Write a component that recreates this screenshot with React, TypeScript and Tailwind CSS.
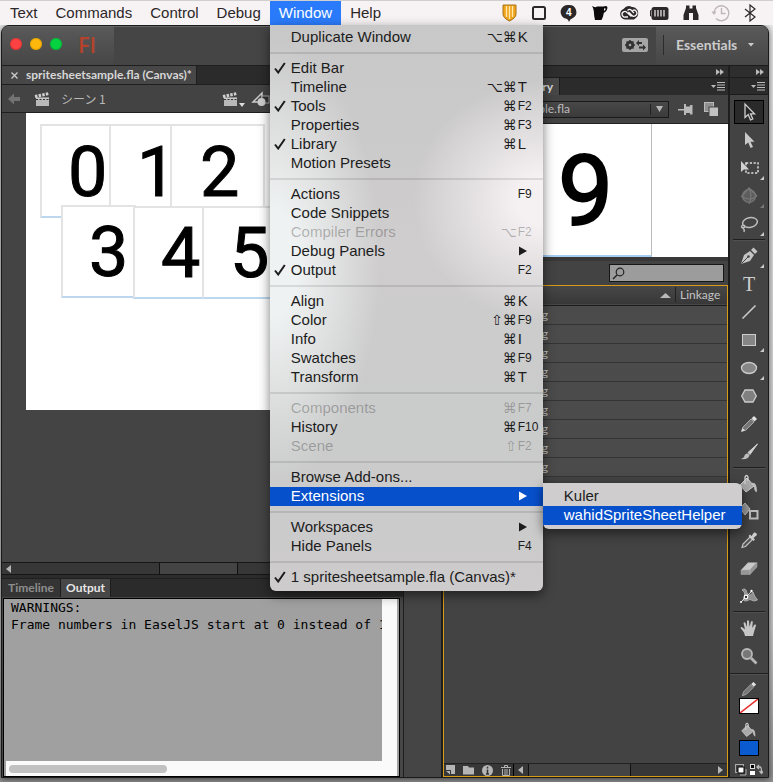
import React from "react";

type Entry =
  | { kind: "sep" }
  | {
      kind: "item";
      label: string;
      mods?: string;
      keyName?: string;
      checked?: boolean;
      disabled?: boolean;
      sub?: boolean;
      active?: boolean;
    };

const sep: Entry = { kind: "sep" };
const item = (label: string, rest: Partial<Extract<Entry, { kind: "item" }>> = {}): Entry => ({
  ...rest,
  kind: "item",
  label,
});

const windowMenu: Entry[] = [
  item("Duplicate Window", { mods: "⌥⌘", keyName: "K" }),
  sep,
  item("Edit Bar", { checked: true }),
  item("Timeline", { mods: "⌥⌘", keyName: "T" }),
  item("Tools", { checked: true, mods: "⌘", keyName: "F2" }),
  item("Properties", { mods: "⌘", keyName: "F3" }),
  item("Library", { checked: true, mods: "⌘", keyName: "L" }),
  item("Motion Presets"),
  sep,
  item("Actions", { keyName: "F9" }),
  item("Code Snippets"),
  item("Compiler Errors", { mods: "⌥", keyName: "F2", disabled: true }),
  item("Debug Panels", { sub: true }),
  item("Output", { checked: true, keyName: "F2" }),
  sep,
  item("Align", { mods: "⌘", keyName: "K" }),
  item("Color", { mods: "⇧⌘", keyName: "F9" }),
  item("Info", { mods: "⌘", keyName: "I" }),
  item("Swatches", { mods: "⌘", keyName: "F9" }),
  item("Transform", { mods: "⌘", keyName: "T" }),
  sep,
  item("Components", { mods: "⌘", keyName: "F7", disabled: true }),
  item("History", { mods: "⌘", keyName: "F10" }),
  item("Scene", { mods: "⇧", keyName: "F2", disabled: true }),
  sep,
  item("Browse Add-ons..."),
  item("Extensions", { sub: true, active: true }),
  sep,
  item("Workspaces", { sub: true }),
  item("Hide Panels", { keyName: "F4" }),
  sep,
  item("1 spritesheetsample.fla (Canvas)*", { checked: true }),
];

function MenuRow({ entry }: { entry: Entry }) {
  if (entry.kind === "sep") {
    return (
      <div role="separator" className="flex h-3 items-center">
        <div className="h-[2px] w-full bg-black/10" />
      </div>
    );
  }
  const tone = entry.active
    ? "bg-[#0650cc] text-white"
    : entry.disabled
      ? "text-[#1c1c1c]/30"
      : "text-[#1c1c1c]";
  const fkey = entry.keyName && entry.keyName.length > 1;
  return (
    <button
      type="button"
      role="menuitem"
      disabled={entry.disabled}
      className={`relative flex h-[19px] w-full items-center pb-px text-left leading-[18px] whitespace-nowrap ${tone}`}
    >
      <span className="flex w-[21px] justify-center">
        {entry.checked && (
          <svg width="12" height="12" viewBox="0 0 12 12" fill="none" stroke="currentColor" strokeWidth="2">
            <path d="M1 6.5 L4.2 10.5 L10.8 1" />
          </svg>
        )}
      </span>
      <span className="flex-1">{entry.label}</span>
      {entry.mods && (
        <span className="pr-px font-['DejaVu_Sans',sans-serif] text-sm leading-[18px]">{entry.mods}</span>
      )}
      {(entry.keyName || entry.sub) && (
        <span className="flex w-[25px] items-center">
          {entry.sub ? (
            <svg width="9" height="10" viewBox="0 0 9 10" fill="currentColor">
              <path d="M1 .5 L9 5 L1 9.5Z" />
            </svg>
          ) : (
            <span className={fkey ? "text-xs leading-[18px]" : "text-[15px] leading-[18px]"}>{entry.keyName}</span>
          )}
        </span>
      )}
    </button>
  );
}

function WindowMenu() {
  return (
    <div
      role="menu"
      className="absolute top-full left-0 z-20 w-[273px] rounded-b-md bg-[radial-gradient(ellipse_130px_120px_at_100%_31%,#f5f0f2_20%,#f5f0f200_100%),radial-gradient(ellipse_110px_220px_at_0%_42%,#eff2f2_25%,#eff2f200_100%),linear-gradient(#c8c8c8,#cfcdce_40%,#cacbcb_70%,#cdcbcc)] pt-[3px] pb-1 shadow-[0_4px_12px_#0008]"
    >
      {windowMenu.map((e, i) => (
        <MenuRow key={i} entry={e} />
      ))}
      <div
        role="menu"
        className="absolute top-[458px] left-full w-[199px] rounded-md rounded-tl-none bg-[#cfcdce] py-1 shadow-[0_4px_12px_#0008]"
      >
        <MenuRow entry={item("Kuler")} />
        <MenuRow entry={item("wahidSpriteSheetHelper", { active: true })} />
      </div>
    </div>
  );
}

function StatusIcons() {
  const c = "#2b2729";
  return (
    <div className="flex flex-1 items-center justify-end gap-[10px] pr-[14px]">
      <svg width="20" height="20" viewBox="0 0 20 20">
        <path d="M4 2h13v9q0 4-6.500 7Q4 15 4 11Z" fill="#f0a41c" stroke="#a8741a" />
        <path d="M7.500 3v11M10.500 3v13M13.500 3v11" stroke="#fde9b0" strokeWidth="1.300" />
      </svg>
      <svg width="20" height="20" viewBox="0 0 20 20" fill="none" stroke={c} strokeWidth="2">
        <rect x="4" y="4" width="12" height="12" rx="1.500" />
      </svg>
      <svg width="20" height="20" viewBox="0 0 20 20">
        <path d="M10 2a7.200 7 0 0 1 3.500 13.200Q11 16 10 19Q9.500 16.500 7.500 15.800A7.200 7 0 0 1 10 2Z" fill={c} />
        <text x="7" y="13" fontSize="10" fontWeight="bold" fill="#fff" fontFamily="Liberation Sans, sans-serif">4</text>
      </svg>
      <svg width="20" height="20" viewBox="0 0 20 20">
        <path d="M3 3Q6 5 8 3.500H14.500Q18.500 2 18.500 5Q18 8.500 14.800 10Q14 15 12.500 17H6Q5 13 4.800 8Q4.500 5 3 3Z" fill="#0c0a0b" />
        <path d="M15 5.500q1.800-.5 1.600.5T15 8Z" fill="#f7f2f4" />
      </svg>
      <svg width="20" height="20" viewBox="0 0 20 20">
        <path d="M6 16.500A5.500 5.500 0 0 1 4.500 6Q8 1.500 13 4Q16 3.500 18.500 7Q21 13 15 16.500Z" fill={c} />
        <path d="M12.500 13.500 8 9.500A2.800 2.800 0 1 0 6.500 14H9M8.500 7.500Q11 5 13 8L15 10M9.500 9 12.500 12A3 3 0 1 0 13.500 7.500" fill="none" stroke="#f7f2f4" strokeWidth="1.300" />
      </svg>
      <svg width="22" height="20" viewBox="0 0 22 20">
        <rect x="2.500" y="4" width="17" height="13" rx="2.500" fill={c} />
        <path d="M2.500 7.500H1.500V13H2.500" stroke={c} fill="none" />
        <path d="M6 7v6.500M9 7v6.500M12 7v6.500M15 7v6.500" stroke="#f7f2f4" strokeWidth="1.200" />
      </svg>
      <svg width="20" height="20" viewBox="0 0 20 20" fill={c}>
        <path d="M5 2.500H8.500V5.500H11.500V2.500H15V5L17.500 12V17H12V10H8V17H2.500V12L5 5Z" />
      </svg>
      <svg width="20" height="20" viewBox="0 0 20 20" fill="none" stroke="#bdb7ba" strokeWidth="1.400">
        <path d="M3 9A7.500 7.500 0 1 1 5 15.500M10.500 5V10.500H14.500" />
        <path d="M.5 8.500h5L3 12Z" fill="#bdb7ba" stroke="none" />
      </svg>
      <svg width="18" height="20" viewBox="0 0 18 20" fill="none" stroke={c} strokeWidth="1.200">
        <path d="M4 6 14 14 9 18V2L14 6 4 14" />
      </svg>
    </div>
  );
}

function MenuBar() {
  const cell = "flex h-full items-center px-[9px]";
  return (
    <nav className="relative z-10 flex h-[25px] shrink-0 border-t border-[#cfcfcf] bg-[#f7f2f4] text-[15px] text-[#2b2729]">
      {["Text", "Commands", "Control", "Debug"].map((n) => (
        <button key={n} type="button" className={`${cell} first:pl-[10px]`}>
          {n}
        </button>
      ))}
      <div className="relative">
        <button type="button" aria-expanded="true" className={`${cell} bg-[#2a7bfb] text-white`}>
          Window
        </button>
        <WindowMenu />
      </div>
      <button type="button" className={cell}>
        Help
      </button>
      <StatusIcons />
    </nav>
  );
}

function TitleBar() {
  return (
    <header className="flex h-[39px] shrink-0 items-stretch rounded-t-md border-t border-[#666] bg-[#454545]">
      <div className="flex w-28 items-center gap-2 rounded-tl-md bg-linear-to-b from-[#595959] to-[#464646] pb-1 pl-2">
        <button type="button" aria-label="Close" className="size-3 rounded-full bg-[#fc4142] ring-1 ring-[#c92c2c]/60 ring-inset" />
        <button type="button" aria-label="Minimize" className="size-3 rounded-full bg-[#fdb90b] ring-1 ring-[#d09300]/60 ring-inset" />
        <button type="button" aria-label="Zoom" className="size-3 rounded-full bg-[#06d241] ring-1 ring-[#08a035]/60 ring-inset" />
        <span className="pl-2 font-['Open_Sans',sans-serif] text-[22px] leading-[30px] font-semibold text-[#b5432b]">Fl</span>
      </div>
      <div className="flex flex-1 items-center justify-end pr-2 pb-[2px]">
        <button type="button" aria-label="Sync settings" className="flex h-[14px] w-[26px] items-center rounded-xs bg-[#a5a5a5]">
          <svg width="26" height="14" viewBox="0 0 26 14">
            <circle cx="8" cy="7" r="3" fill="none" stroke="#333" strokeWidth="2.500" />
            <path d="M8 2v10M3 7h10M4.500 3.500l7 7M11.500 3.500l-7 7" stroke="#333" strokeWidth="1.500" />
            <circle cx="8" cy="7" r="1.300" fill="#a5a5a5" />
            <path d="M14 5 17 2V4H20V6H17V8ZM24 9.500 21 6.500V8.500H17V10.500H21V12.500Z" fill="#333" />
          </svg>
        </button>
      </div>
      <div className="flex w-[112px] items-center rounded-tr-md bg-linear-to-b from-[#595959] to-[#464646] pb-[3px] pl-[7px] font-bold text-[#ccc]">
        <div className="h-5 w-px bg-[#2c2c2c]" />
        <button type="button" className="flex flex-1 items-center justify-between pr-[14px] pl-3 text-sm">
          Essentials
          <svg width="6" height="4" viewBox="0 0 6 4" fill="#ccc">
            <path d="M0 0h6L3 3.500Z" />
          </svg>
        </button>
      </div>
    </header>
  );
}

function Clapper() {
  return (
    <svg width="17" height="16" viewBox="0 0 17 16">
      <rect x="2" y="7" width="13" height="8" fill="#b9b9b9" />
      <path d="M2 8.500h13" stroke="#333" strokeWidth="1" strokeDasharray="2 1.500" />
      <path d="M1 5.500 15 2.500" stroke="#d0d0d0" strokeWidth="3" strokeDasharray="2.500 1.200" />
      <path d="M2 7 15 7" stroke="#ddd" strokeWidth="1" />
    </svg>
  );
}

function Tile({ digit, box, text }: { digit: string; box: string; text: string }) {
  return (
    <div className={`absolute border-2 border-[#e3e3e3] border-b-[#bcd7ee] bg-white ${box}`}>
      <span
        className={`absolute font-['Roboto',sans-serif] text-[70px] leading-[68px] text-black [-webkit-text-stroke:1px_#000] ${text}`}
      >
        {digit}
      </span>
    </div>
  );
}

function DocumentPane() {
  return (
    <>
      <div className="flex h-5 shrink-0 border-y border-[#1f1f1f] bg-[#2b2b2b]">
        <div className="flex w-[195px] items-center gap-2 border-r border-[#1f1f1f] bg-[#474747] pl-[9px] text-xs font-bold text-[#d6d6d6]">
          <button type="button" aria-label="Close document">
            <svg width="7" height="7" viewBox="0 0 7 7" stroke="#ccc" strokeWidth="1.300">
              <path d="M.5 .5 6.500 6.500M6.500 .5.500 6.500" />
            </svg>
          </button>
          <span className="whitespace-nowrap">spritesheetsample.fla (Canvas)*</span>
        </div>
      </div>
      <div className="flex h-7 shrink-0 items-center border-b border-[#1f1f1f] bg-[#434343] pl-[6px] text-[#b9b9b9]">
        <svg width="12" height="12" viewBox="0 0 12 12" fill="#737373">
          <path d="M0 6 6 .5V4H12V8H6V11.500Z" />
        </svg>
        <div className="flex items-center gap-[10px] pl-[14px]">
          <Clapper />
          <span className="font-['Noto_Sans_CJK_JP',sans-serif] text-xs">シーン 1</span>
        </div>
        <div className="ml-[116px] flex items-center gap-[6px]">
          <button type="button" aria-label="Edit scene" className="flex items-end">
            <Clapper />
            <svg width="6" height="4" viewBox="0 0 6 4" fill="#ddd">
              <path d="M0 0h6L3 4Z" />
            </svg>
          </button>
          <button type="button" aria-label="Edit symbols">
            <svg width="20" height="16" viewBox="0 0 20 16">
              <path d="M2 11 11 2V11Z" fill="#444" stroke="#ccc" strokeWidth="1.500" />
              <rect x="11" y="5" width="7" height="7" fill="#333" stroke="#aaa" />
              <circle cx="10.500" cy="11" r="4" fill="#ccc" />
            </svg>
          </button>
        </div>
      </div>
      <div className="relative min-h-0 flex-1 overflow-hidden bg-[#444] pl-6">
        <div className="relative h-[297px] bg-white">
          <Tile digit="0" box="left-[14px] top-[11px] h-[94px] w-[72px]" text="left-[26px] top-[12px]" />
          <Tile digit="1" box="left-[83px] top-[11px] h-[94px] w-[63px]" text="left-[26px] top-[12px]" />
          <Tile digit="2" box="left-[144px] top-[11px] h-[94px] w-[95px]" text="left-[28px] top-[12px]" />
          <Tile digit="3" box="left-[35px] top-[92px] h-[93px] w-[75px]" text="left-[26px] top-[11px]" />
          <Tile digit="4" box="left-[107px] top-[93px] h-[93px] w-[71px]" text="left-[26px] top-[11px]" />
          <Tile digit="5" box="left-[176px] top-[93px] h-[93px] w-[80px]" text="left-[26px] top-[11px]" />
        </div>
      </div>
      <div className="flex h-[13px] shrink-0 items-center border-y border-[#161616] bg-[#373737] pl-1">
        <svg width="5" height="8" viewBox="0 0 5 8" fill="#b5b5b5">
          <path d="M5 0V8L0 4Z" />
        </svg>
        <div className="ml-[148px] h-full w-[79px] border-x border-[#111] bg-[#444]" />
      </div>
    </>
  );
}

function OutputPane() {
  return (
    <section className="mt-[3px] flex shrink-0 flex-col border-t border-[#1f1f1f]">
      <div className="flex h-[18px] items-stretch bg-[#2b2b2b] text-xs font-bold">
        <button type="button" className="w-[59px] border-r border-[#1c1c1c] bg-[#343434] text-[#8d8d8d]">
          Timeline
        </button>
        <button type="button" className="w-[50px] border-r border-[#1c1c1c] bg-[#474747] text-[#e6e6e6]">
          Output
        </button>
      </div>
      <div className="flex h-[180px] bg-[#474747] pt-[1px] pr-[3px] pl-[1px]">
        <div className="flex flex-1 overflow-hidden border border-black bg-[#a0a0a0]">
          <div className="flex w-0 flex-1 flex-col">
            <pre className="flex-1 overflow-hidden pl-[7px] font-['DejaVu_Sans_Mono',monospace] text-[13px] leading-[17px] text-black">
              {"WARNINGS:\nFrame numbers in EaselJS start at 0 instead of 1"}
            </pre>
            <div className="ml-[2px] flex h-[15px] items-center bg-[#fafafa] pl-[3px]">
              <div className="h-2 w-[158px] rounded-full bg-[#c1c1c1]" />
            </div>
          </div>
          <div className="w-[15px] bg-[#fafafa]" />
          <div className="w-[2px] bg-[#a0a0a0]" />
        </div>
      </div>
    </section>
  );
}

function Chevrons() {
  return (
    <svg width="8" height="6" viewBox="0 0 8 6" fill="#bbb">
      <path d="M0 0 4 3 0 6ZM4 0 8 3 4 6Z" />
    </svg>
  );
}

function PanelMenu() {
  return (
    <svg width="14" height="9" viewBox="0 0 14 9">
      <path d="M0 3h5L2.500 6Z" fill="#bbb" />
      <path d="M6 .5h8M6 3h8M6 5.500h8M6 8h8" stroke="#bbb" />
    </svg>
  );
}

function LibraryPane() {
  return (
    <section className="flex w-[285px] shrink-0 flex-col bg-[#434343]">
      <div className="flex h-3 items-center justify-end border-t border-[#1c1c1c] bg-[#2e2e2e] pr-[4px]">
        <Chevrons />
      </div>
      <div className="flex h-[18px] items-stretch justify-between border-t border-[#1c1c1c] bg-[#2b2b2b] pr-[3px]">
        <div className="flex w-[117px] items-center justify-end border-r border-[#1c1c1c] bg-[#474747] pr-[6px] text-xs font-bold text-[#ddd]">
          Library
        </div>
        <button type="button" aria-label="Library options">
          <PanelMenu />
        </button>
      </div>
      <div className="flex h-[29px] items-center border-b border-[#222] pl-1 text-xs">
        <button
          type="button"
          aria-label="Document"
          className="flex h-[17px] w-[222px] items-center justify-between border border-[#1a1a1a] bg-linear-to-b from-[#484848] to-[#3b3b3b] text-[#bdbdbd]"
        >
          <span className="w-[122px] text-right">spritesheetsample.fla</span>
          <span className="flex h-[11px] items-center border-l border-[#222] px-[5px]">
            <svg width="7" height="6" viewBox="0 0 7 6" fill="#b5b5b5">
              <path d="M0 0h7L3.500 6Z" />
            </svg>
          </span>
        </button>
        <button type="button" aria-label="Pin library" className="pl-[9px]">
          <svg width="15" height="11" viewBox="0 0 15 11" fill="#b9b9b9">
            <path d="M0 5h6v1.500H0ZM6 0h2v2.500h4V1h2.500v9.500H12V9H8v2H6Z" />
          </svg>
        </button>
        <button type="button" aria-label="New library panel" className="pl-[11px]">
          <svg width="15" height="15" viewBox="0 0 15 15">
            <rect x="0.500" y="0.500" width="9" height="9" fill="#909090" stroke="#bbb" />
            <rect x="5" y="5" width="9.500" height="9.500" fill="#c2c2c2" stroke="#444" />
          </svg>
        </button>
      </div>
      <div className="flex h-[133px] bg-white">
        <div className="flex w-[209px] items-center justify-end border-r border-b-2 border-r-[#bbb] border-b-[#a6cdf0] pt-1 pr-[38px]">
          <span className="font-['Roboto',sans-serif] text-[98px] leading-[120px] text-black [-webkit-text-stroke:2px_#000]">9</span>
        </div>
      </div>
      <div className="h-1 bg-[#383838]" />
      <div className="flex h-6 items-center justify-end pr-1">
        <label className="flex h-[18px] w-[115px] items-center border border-[#161616] bg-[#9c9c9c] pl-[2px]">
          <svg width="13" height="13" viewBox="0 0 13 13" fill="none" stroke="#222">
            <circle cx="8" cy="5" r="3.800" strokeWidth="1.200" />
            <path d="M5 8 1 12" strokeWidth="1.500" />
          </svg>
          <input type="text" aria-label="Search library" className="w-0 flex-1 bg-transparent text-xs outline-none" />
        </label>
      </div>
      <div className="flex flex-1 flex-col border border-[#d99a16]">
        <table className="w-full text-xs text-[#c4c4c4]">
          <thead>
            <tr className="h-[19px] border-b border-[#1c1c1c] bg-linear-to-b from-[#474747] to-[#383838]">
              <th className="w-[231px] p-0">
                <span className="flex justify-end pr-1">
                  <svg width="11" height="5" viewBox="0 0 11 5" fill="#b9b9b9">
                    <path d="M0 5 5.500 0 11 5Z" />
                  </svg>
                </span>
              </th>
              <th className="p-0 text-left leading-[18px] font-normal">
                <span className="border-l border-[#222] pl-1">Linkage</span>
              </th>
            </tr>
          </thead>
          <tbody>
            {["1", "2", "3", "4", "5", "6", "7", "8", "9"].map((n) => (
              <tr key={n} className="h-[19px] border-b border-[#343434] bg-[#4b4b4b]">
                <td className="p-0 leading-[18px]">
                  <span className="block w-[104px] text-right">{n}.png</span>
                </td>
                <td />
              </tr>
            ))}
          </tbody>
        </table>
        <div className="flex-1" />
        <div className="flex h-[13px] border-t border-[#222] bg-[#373737]">
          <div className="flex w-[69px] items-center gap-2 pl-[2px]">
            <svg width="9" height="10" viewBox="0 0 9 10" fill="#b5b5b5">
              <path d="M0 0h9v9H5V5H0Z" />
              <path d="M0 6l4 3.500V6Z" />
            </svg>
            <svg width="11" height="10" viewBox="0 0 11 10" fill="#b5b5b5">
              <path d="M0 1h5l1 1.500h5V9.500H0Z" />
            </svg>
            <svg width="11" height="11" viewBox="0 0 11 11">
              <circle cx="5.500" cy="5.500" r="5.500" fill="#b5b5b5" />
              <path d="M5.500 1.800v1.800M5.500 4.500v4.500M4 9h3" stroke="#333" strokeWidth="1.500" />
            </svg>
            <svg width="10" height="11" viewBox="0 0 10 11" fill="none" stroke="#b5b5b5">
              <path d="M0 2.500h10M3.500 2V.5h3V2" />
              <path d="M1.500 4v6.500h7V4M4 4v6M6 4v6" />
            </svg>
          </div>
          <div className="flex flex-1 items-center border-l border-black pl-1">
            <svg width="5" height="8" viewBox="0 0 5 8" fill="#b5b5b5">
              <path d="M5 0V8L0 4Z" />
            </svg>
            <div className="ml-[5px] h-full w-[103px] border-x border-[#111] bg-[#444]" />
            <svg className="mr-1 ml-auto" width="5" height="8" viewBox="0 0 5 8" fill="#b5b5b5">
              <path d="M0 0V8L5 4Z" />
            </svg>
          </div>
        </div>
      </div>
    </section>
  );
}

const g = "#bdbdbd";

type ToolDef = { name: string; art: React.ReactNode; more?: boolean; selected?: boolean; dim?: boolean };

const bucket = (
  <>
    <path d="M3 13 10 6 17 14 9 20Z" fill="#a9a9a9" stroke="#d0d0d0" />
    <path d="M8 12V5q1.500-3 3 0V9" fill="none" stroke="#d0d0d0" strokeWidth="1.300" />
    <path d="M14 11q6-2 6 9q-3 0-3-6" fill={g} />
  </>
);

const toolGroups: ToolDef[][] = [
  [
    {
      name: "Selection",
      selected: true,
      art: <path d="M8 4V17.500L11.200 14.500 13.500 20 15.800 19 13.500 13.800H17.500Z" fill="#262626" stroke="#cfcfcf" strokeWidth="1.300" />,
    },
    {
      name: "Subselection",
      art: <path d="M8 4V17L11.200 14.500 13.500 20 16 19 13.500 13.800H17.500Z" fill="#c9c9c9" />,
    },
    {
      name: "Free Transform",
      more: true,
      art: (
        <>
          <rect x="9" y="7" width="12" height="10" fill="none" stroke="#ddd" strokeWidth="1.500" strokeDasharray="2.200 1.600" />
          <path d="M4 5V16L6.800 13.500H12Z" fill="#d0d0d0" />
        </>
      ),
    },
    {
      name: "3D Rotation",
      more: true,
      dim: true,
      art: (
        <g fill="none" stroke="#777" strokeWidth="1.200">
          <circle cx="12" cy="12" r="6.500" fill="#5d5d5d" />
          <path d="M4 12Q12 18 20 12M12 4Q16 12 12 20M5 12 12 4 20 12" />
        </g>
      ),
    },
    {
      name: "Lasso",
      more: true,
      art: (
        <g fill="none" stroke={g} strokeWidth="1.500">
          <ellipse cx="13" cy="10.500" rx="7.500" ry="4.800" transform="rotate(-12 13 10.500)" />
          <path d="M6 13q-3 2 0 3q3-1 1-3M6 16q2 2 1 4" />
        </g>
      ),
    },
  ],
  [
    {
      name: "Pen",
      more: true,
      art: (
        <>
          <path d="M4 20 7 11 13 7 17 11 13 17Z" fill="#c4c4c4" />
          <path d="M14 6 16.500 3.500 20.500 7.500 18 10Z" fill="#c4c4c4" />
          <path d="M4.500 19.500 11 13" stroke="#444" />
          <circle cx="11.500" cy="12.500" r="1.300" fill="#444" />
        </>
      ),
    },
    {
      name: "Text",
      art: (
        <text x="12" y="19" textAnchor="middle" fontSize="20" fill="#cfcfcf" fontFamily="Liberation Serif, serif">
          T
        </text>
      ),
    },
    { name: "Line", art: <path d="M5.500 18.500 18.500 5.500" stroke="#c9c9c9" strokeWidth="1.600" /> },
    {
      name: "Rectangle",
      more: true,
      art: <rect x="5.500" y="6.500" width="13" height="11" fill="#868686" stroke="#ccc" />,
    },
    { name: "Oval", more: true, art: <ellipse cx="12" cy="12" rx="7.500" ry="5.500" fill="#868686" stroke="#ccc" strokeWidth="1.300" /> },
    { name: "PolyStar", art: <path d="M8 6H16L19.300 12 16 18H8L4.700 12Z" fill="#808080" stroke="#ccc" strokeWidth="1.300" /> },
    {
      name: "Pencil",
      art: (
        <>
          <path d="M4.500 19.500 6 15 14 7 17 10 9 18Z" fill="#777" stroke="#a9a9a9" />
          <path d="M14.500 6.500 17 4 20 7 17.500 9.500Z" fill="#e3e3e3" />
          <path d="M4.500 19.500 5.500 16 8 18.500Z" fill="#ddd" />
        </>
      ),
    },
    {
      name: "Brush",
      art: (
        <>
          <path d="M20.500 4 11 12.500 13 14.500Z" fill="#d0d0d0" stroke="#d0d0d0" />
          <path d="M12.500 15Q12 20 3.500 19Q7 18 7.500 15.500Q9.500 12 12.500 15Z" fill="#bdbdbd" />
        </>
      ),
    },
  ],
  [
    { name: "Paint Bucket", art: bucket },
    {
      name: "Ink Bottle",
      art: (
        <>
          <path d="M3 8 8 3 13 9 8 15Z" fill="#999" stroke={g} />
          <rect x="13" y="11" width="7.500" height="7.500" fill="none" stroke="#bbb" strokeWidth="2" />
        </>
      ),
    },
    {
      name: "Eyedropper",
      art: (
        <>
          <path d="M5 19.500 6 16 13 9 15.500 11.500 8.500 18.500Z" fill="#555" stroke="#c4c4c4" strokeWidth="1.200" />
          <path d="M11.500 8 13 6.500 14.500 8 17 4.500Q20 4 20 7L16.500 10 18 11.500 16.500 13Z" fill="#ccc" />
        </>
      ),
    },
    {
      name: "Eraser",
      art: (
        <>
          <path d="M4 14 11 6.500H20L13 14Z" fill="#c9c9c9" />
          <path d="M4 14H13V18.500H4ZM13 14 20 6.500V11L13 18.500Z" fill="#959595" stroke="#aaa" strokeWidth=".5" />
        </>
      ),
    },
    {
      name: "Width",
      art: (
        <>
          <path d="M5 6Q9 3 10 9Q13 14 16 8Q17 12 20.500 16L17 17Q13 14 9 17Q4 17 8 12Q8 7 5 6Z" fill="#909090" stroke="#aaa" />
          <path d="M4 18 14.500 7.500" stroke="#ddd" />
          <circle cx="9" cy="13" r="1.800" fill="#333" stroke="#fff" strokeWidth="1.200" />
          <circle cx="4" cy="18" r="1" fill="#fff" />
          <circle cx="14.500" cy="7" r="1.200" fill="#fff" />
        </>
      ),
    },
  ],
  [
    {
      name: "Hand",
      art: (
        <path
          d="M8 20 7 16.500 3.500 12Q4 10.500 5.500 11.500L8 13.500 6.500 7Q7.500 5.500 8.500 7L10 11 10 5Q11 3.500 12 5L12.500 11 14 5.500Q15.500 4.500 15.800 6L15.200 12 17.500 8.500Q19.300 8 19 9.500L17 16 16 20Z"
          fill="#c6c6c6"
        />
      ),
    },
    {
      name: "Zoom",
      art: (
        <>
          <path d="M14 14 19.500 19.500" stroke="#b5b5b5" strokeWidth="2.800" />
          <circle cx="10" cy="10" r="5" fill="#777" stroke="#b9b9b9" strokeWidth="1.800" />
        </>
      ),
    },
  ],
];

function Tool({ tool }: { tool: ToolDef }) {
  return (
    <button
      type="button"
      aria-label={tool.name}
      className={`relative flex h-6 w-[30px] items-center justify-center ${
        tool.selected ? "border border-black bg-[#2a2a2a]" : ""
      }`}
    >
      <svg className="shrink-0" width="24" height="24" viewBox="0 0 24 24">
        {tool.art}
      </svg>
      {tool.more && (
        <svg className="absolute right-0 bottom-0" width="4" height="4" viewBox="0 0 4 4">
          <path d="M4 0V4H0Z" fill={tool.dim ? "#777" : "#c9c9c9"} />
        </svg>
      )}
    </button>
  );
}

function ToolsPane() {
  return (
    <aside className="flex w-10 shrink-0 flex-col border-l-2 border-[#1e1e1e] bg-[#434343]">
      <div className="flex h-3 items-center justify-end border-t border-[#1c1c1c] bg-[#2e2e2e] pr-[4px]">
        <Chevrons />
      </div>
      <div className="mb-[3px] flex h-[18px] items-center justify-end border-y border-[#1c1c1c] bg-[#2b2b2b] pr-[3px]">
        <PanelMenu />
      </div>
      {toolGroups.map((group, i) => (
        <div key={i} className="flex flex-col items-center">
          {group.map((t) => (
            <div key={t.name} className="flex h-7 items-center">
              <Tool tool={t} />
            </div>
          ))}
          {i < 3 && <div className="my-px h-[2px] w-8 border-t border-[#1f1f1f] bg-[#505050]" />}
        </div>
      ))}
      <div className="mt-[3px] h-[2px] border-t border-[#1f1f1f] bg-[#505050]" />
      <div className="flex flex-1 flex-col items-center pt-[5px]">
        <svg width="16" height="18" viewBox="3 3 18 18">
          <path d="M4.500 19.500 6 15 14 7 17 10 9 18Z" fill="#777" stroke="#a9a9a9" />
          <path d="M14.500 6.500 17 4 20 7 17.500 9.500Z" fill="#e3e3e3" />
        </svg>
        <button type="button" aria-label="Stroke color" className="h-4 w-5 border border-black bg-white">
          <svg width="18" height="14" viewBox="0 0 18 14">
            <path d="M0 14 18 0" stroke="#e5322d" strokeWidth="1.500" />
          </svg>
        </button>
        <svg className="mt-2" width="16" height="16" viewBox="2 2 20 20">
          {bucket}
        </svg>
        <button type="button" aria-label="Fill color" className="mt-[2px] h-4 w-5 border border-black bg-[#0a5bd0]" />
        <div className="mt-2 flex gap-[3px]">
          <svg width="12" height="12" viewBox="0 0 12 12">
            <rect x=".5" y=".5" width="8" height="8" fill="#444" stroke="#aaa" />
            <rect x="3" y="3" width="6" height="6" fill="#fff" stroke="#000" />
            <path d="M5 11h6V5" stroke="#aaa" fill="none" />
          </svg>
          <svg width="13" height="12" viewBox="0 0 13 12">
            <rect x=".5" y=".5" width="4" height="4" fill="#000" stroke="#ddd" />
            <rect x="0" y="7" width="5" height="4" fill="#fff" />
            <path d="M7 3h3q1.500 0 1.500 5M9 1 7 3l2 2M9.500 7l2 2.500 2-2.500" stroke="#bbb" fill="none" strokeWidth="1.300" />
          </svg>
        </div>
      </div>
    </aside>
  );
}

export default function App() {
  return (
    <div className="flex min-h-screen flex-col bg-[linear-gradient(#e9e9ea,#c9c9ca_80%,#8f8f8f)] font-['Liberation_Sans',Arial,sans-serif]">
      <MenuBar />
      <main className="mr-1 mb-1 ml-px flex flex-1 flex-col rounded-t-lg border border-[#1a1a1a] bg-[#434343] font-['Lato',sans-serif] shadow-[0_1px_6px_#0009]">
        <TitleBar />
        <div className="flex flex-1">
          <div className="flex min-w-0 flex-1 flex-col bg-[#2b2b2b]">
            <DocumentPane />
            <OutputPane />
          </div>
          <div className="w-10 shrink-0 border-r-2 border-l border-[#1e1e1e] bg-[#454545]" />
          <LibraryPane />
          <ToolsPane />
        </div>
      </main>
    </div>
  );
}
